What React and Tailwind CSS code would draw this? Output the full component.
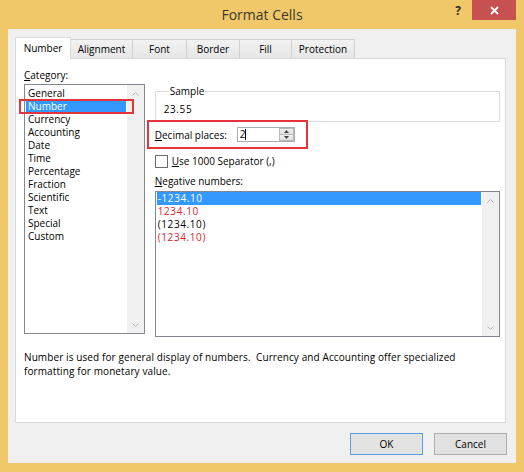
import React from 'react'

const categories = [
  'General',
  'Number',
  'Currency',
  'Accounting',
  'Date',
  'Time',
  'Percentage',
  'Fraction',
  'Scientific',
  'Text',
  'Special',
  'Custom',
]

const negatives = [
  { label: '-1234.10', red: false, selected: true },
  { label: '1234.10', red: true },
  { label: '(1234.10)', red: false },
  { label: '(1234.10)', red: true },
]

const tabs = [
  { label: 'Number', w: 'w-[56px]', active: true },
  { label: 'Alignment', w: 'w-[63px]' },
  { label: 'Font', w: 'w-[55px]' },
  { label: 'Border', w: 'w-[54px]' },
  { label: 'Fill', w: 'w-[53px]' },
  { label: 'Protection', w: 'w-[64px]' },
]

function Chevron({ down }) {
  return (
    <svg width="7" height="4" viewBox="0 0 7 4" className="block">
      <polyline
        points={down ? '0.5,0.5 3.5,3.5 6.5,0.5' : '0.5,3.5 3.5,0.5 6.5,3.5'}
        fill="none"
        stroke="#b4b4b4"
        strokeWidth="1"
      />
    </svg>
  )
}

function Scrollbar() {
  return (
    <div className="w-[17px] bg-[#f0f0f0] flex flex-col justify-between">
      <div className="h-[17px] flex items-center justify-center">
        <Chevron />
      </div>
      <div className="h-[17px] flex items-center justify-center">
        <Chevron down />
      </div>
    </div>
  )
}

function TitleBar() {
  return (
    <div className="h-[29px] grid grid-cols-[1fr_auto_1fr]">
      <div />
      <div className="flex items-center text-[14px] text-[#3d382c] leading-none pt-[1px]">
        Format Cells
      </div>
      <div className="flex items-start justify-end pr-[8px]">
        <div className="w-[16px] h-[20px] mr-[6px] flex items-center justify-center text-[12px] font-bold text-[#2e2a22]">
          ?
        </div>
        <div className="w-[44px] h-[20px] bg-[#c75050] flex items-center justify-center">
          <svg width="9" height="9" viewBox="0 0 9 9">
            <path d="M1 1 L8 8 M8 1 L1 8" stroke="#fff" strokeWidth="1.8" />
          </svg>
        </div>
      </div>
    </div>
  )
}

function Tabs() {
  return (
    <div className="flex items-end pl-[7px] pt-[8px]">
      {tabs.map((t) =>
        t.active ? (
          <div
            key={t.label}
            className={`${t.w} h-[22px] -mb-px relative z-10 bg-white border border-b-0 border-[#d9d9d9] flex items-center justify-center`}
          >
            {t.label}
          </div>
        ) : (
          <div
            key={t.label}
            className={`${t.w} h-[19px] -ml-px bg-gradient-to-b from-[#f2f2f2] to-[#e6e6e6] border border-b-0 border-[#d0d0d0] flex items-center justify-center pt-[1px]`}
          >
            {t.label}
          </div>
        )
      )}
    </div>
  )
}

function CategoryList() {
  return (
    <div className="w-[121px]">
      <div className="h-[13px]">
        <span className="underline underline-offset-[1px]">C</span>ategory:
      </div>
      <div className="relative mt-[2px] h-[250px] border border-[#828790] bg-white flex">
        <div className="flex-1 pt-[2px]">
          {categories.map((c) => (
            <div
              key={c}
              className={`h-[13px] mx-[1px] pl-[2px] ${
                c === 'Number' ? 'bg-[#3399ff] text-white' : ''
              }`}
            >
              {c}
            </div>
          ))}
        </div>
        <Scrollbar />
        <div className="absolute left-[-6px] top-[14px] w-[115px] h-[15px] border-2 border-[#e2343a]" />
      </div>
    </div>
  )
}

function NumberOptions() {
  return (
    <div className="w-[346px]">
      <fieldset className="mt-[16px] w-[345px] border border-[#dcdcdc] pl-[8px] pt-[5px] pb-[5px]">
        <legend className="ml-[5px] px-[1px] h-[13px]">Sample</legend>
        <div className="h-[13px] tracking-[0.6px]">23.55</div>
      </fieldset>

      <div className="-ml-[8px] -mt-[2px] w-[161px] h-[29px] border-2 border-[#e2343a] flex items-center pl-[6px]">
        <div className="w-[82px] pt-[1px]">
          <span className="underline underline-offset-[1px]">D</span>ecimal places:
        </div>
        <div className="w-[58px] h-[15px] border border-[#abadb3] bg-white flex">
          <div className="flex-1 flex items-center pl-[2px]">
            <span>2</span>
            <span className="w-px h-[11px] bg-black" />
          </div>
          <div className="w-[15px] flex flex-col">
            <div className="h-[7px] bg-gradient-to-b from-[#f0f0f0] to-[#e0e0e0] border border-[#b9b9b9] flex items-center justify-center">
              <svg width="5" height="3" viewBox="0 0 5 3">
                <path d="M0 3 L2.5 0 L5 3 Z" fill="#404040" />
              </svg>
            </div>
            <div className="h-[6px] bg-gradient-to-b from-[#f0f0f0] to-[#e0e0e0] border border-t-0 border-[#b9b9b9] flex items-center justify-center">
              <svg width="5" height="3" viewBox="0 0 5 3">
                <path d="M0 0 L2.5 3 L5 0 Z" fill="#404040" />
              </svg>
            </div>
          </div>
        </div>
      </div>

      <div className="mt-[6px] flex items-center h-[13px]">
        <div className="w-[13px] h-[13px] border border-[#6b6b6b] bg-white" />
        <div className="ml-[4px]">
          <span className="underline underline-offset-[1px]">U</span>se 1000 Separator (,)
        </div>
      </div>

      <div className="mt-[7px] h-[13px]">
        <span className="underline underline-offset-[1px]">N</span>egative numbers:
      </div>
      <div className="mt-[3px] h-[146px] border border-[#828790] bg-white flex">
        <div className="flex-1">
          {negatives.map((n, i) => (
            <div
              key={i}
              className={`h-[13px] mx-[1px] pl-[1px] tracking-[0.6px] ${
                n.selected ? 'bg-[#3399ff] text-white' : n.red ? 'text-[#e0202e]' : ''
              }`}
            >
              {n.label}
            </div>
          ))}
        </div>
        <Scrollbar />
      </div>
    </div>
  )
}

export default function App() {
  return (
    <div className="w-[524px] h-[472px] bg-[#f0c86a] flex flex-col font-['Open_Sans','Liberation_Sans',sans-serif] text-[10px] leading-[13px] text-black select-none overflow-hidden">
      <TitleBar />
      <div className="mx-[8px] h-[434px] bg-[#f0f0f0] flex flex-col">
        <Tabs />
        <div className="ml-[7px] w-[491px] h-[365px] bg-white border border-[#d9d9d9] pl-[8px] pr-[5px] pt-[10px]">
          <div className="flex items-start gap-[10px]">
            <CategoryList />
            <NumberOptions />
          </div>
          <p className="mt-[13px] leading-[14px] tracking-[0.1px]">
            Number is used for general display of numbers.&nbsp; Currency and Accounting offer specialized
            <br />
            formatting for monetary value.
          </p>
        </div>
        <div className="mt-[10px] flex justify-end gap-[11px] pr-[9px]">
          <button className="w-[73px] h-[22px] border border-[#5a9fe6] bg-[#e3e3e3] text-[10px]">
            OK
          </button>
          <button className="w-[73px] h-[22px] border border-[#adadad] bg-[#e1e1e1] text-[10px]">
            Cancel
          </button>
        </div>
      </div>
    </div>
  )
}
